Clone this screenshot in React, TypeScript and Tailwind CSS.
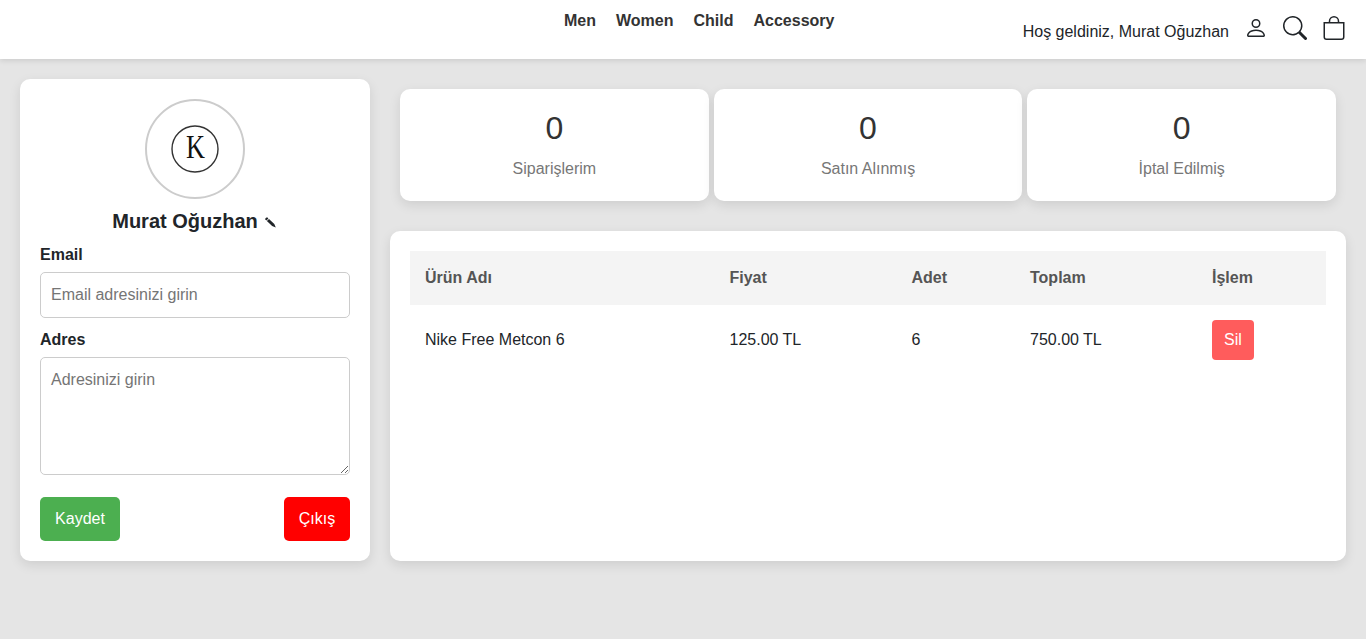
import React from "react";
import { BsBag, BsPerson, BsSearch } from "react-icons/bs";

const links = [
  { label: "Men", width: "w-8" },
  { label: "Women", width: "w-[57.5px]" },
  { label: "Child", width: "w-10" },
  { label: "Accessory", width: "w-[81px]" },
];
const stats = ["Siparişlerim", "Satın Alınmış", "İptal Edilmiş"];

function Header() {
  return (
    <header className="flex h-[59px] items-start bg-white pr-5 shadow-[0_2px_5px_rgba(0,0,0,0.1)]">
      <nav className="ml-[564px] flex gap-5 pt-[9px] font-bold text-[#333]">
        {links.map((l) => (
          <a key={l.label} href="#" className={l.width}>{l.label}</a>
        ))}
      </nav>
      <div className="ml-auto flex items-start pt-4">
        <span className="mr-[15px] pt-1">Hoş geldiniz, Murat Oğuzhan</span>
        <BsPerson className="mr-[15px] h-6 w-6" />
        <BsSearch className="mr-[15px] h-6 w-6" />
        <BsBag className="h-6 w-6" />
      </div>
    </header>
  );
}

function Profile() {
  return (
    <aside className="flex h-[482px] w-[350px] shrink-0 flex-col rounded-[10px] bg-white p-5 shadow-[0_4px_12px_rgba(0,0,0,0.1)]">
      <svg className="mx-auto h-[100px] w-[100px] shrink-0" viewBox="0 0 100 100">
        <circle cx="50" cy="50" r="49" fill="white" stroke="#ccc" strokeWidth="2" />
        <circle cx="50" cy="50" r="23" fill="none" stroke="#333" strokeWidth="1.4" />
        <text x="50.5" y="59" textAnchor="middle" fontSize="34" fill="#111" fontFamily="Liberation Serif, serif" textLength="19" lengthAdjust="spacingAndGlyphs">K</text>
      </svg>
      <h2 className="mt-[10px] flex h-6 items-center justify-center pr-[2px] text-[20px] leading-6 font-bold">
        Murat Oğuzhan
        <svg className="mt-[3px] ml-[7px] h-[11px] w-[11px]" viewBox="0 0 11 11" fill="#212529">
          <path d="M0 2.3Q.4.7 2.1.2L3.4 1.4 1.4 3.5ZM1.9 4.1 4 2 9.3 6.9 10.8 10.6 7.1 9.1Z" />
        </svg>
      </h2>
      <label className="mt-[10px] block font-bold">Email</label>
      <input className="mt-[5px] block h-[46px] w-full rounded-[5px] border border-[#ccc] px-[10px] placeholder:text-[#757575]" placeholder="Email adresinizi girin" />
      <label className="mt-[10px] block font-bold">Adres</label>
      <textarea className="mt-[5px] block h-[118px] w-full shrink-0 resize rounded-[5px] border border-[#ccc] p-[10px] placeholder:text-[#757575]" placeholder="Adresinizi girin" />
      <div className="mt-[22px] flex justify-between text-white">
        <button className="h-11 w-20 rounded-[5px] bg-[#4caf50]">Kaydet</button>
        <button className="h-11 w-[66px] rounded-[5px] bg-[red]">Çıkış</button>
      </div>
    </aside>
  );
}

function Orders() {
  return (
    <section className="h-[330px] rounded-[10px] bg-white p-5 shadow-[0_4px_12px_rgba(0,0,0,0.1)]">
      <table className="w-full table-fixed text-left">
        <colgroup>
          <col className="w-[304.5px]" />
          <col className="w-[182px]" />
          <col className="w-[118.5px]" />
          <col className="w-[182px]" />
          <col />
        </colgroup>
        <thead className="bg-[#f4f4f4] text-[#555]">
          <tr>
            {["Ürün Adı", "Fiyat", "Adet", "Toplam", "İşlem"].map((h) => (
              <th key={h} className="h-[54px] px-[15px] py-0">{h}</th>
            ))}
          </tr>
        </thead>
        <tbody>
          <tr>
            {["Nike Free Metcon 6", "125.00 TL", "6", "750.00 TL"].map((v) => (
              <td key={v} className="h-[70px] px-[15px] py-0">{v}</td>
            ))}
            <td className="px-[15px] py-0">
              <button className="block h-10 w-[42px] rounded bg-[#ff5c5c] text-white">Sil</button>
            </td>
          </tr>
        </tbody>
      </table>
    </section>
  );
}

export default function App() {
  return (
    <div className="h-[639px] overflow-hidden bg-[#e5e5e5] font-['Liberation_Sans',Arial,sans-serif] text-base text-[#212529]">
      <Header />
      <main className="flex gap-5 p-5">
        <Profile />
        <div className="min-w-0 flex-1">
          <div className="mt-[10px] mb-[30px] flex gap-[5px] px-[10px]">
            {stats.map((s) => (
              <div key={s} className="h-28 flex-1 rounded-[10px] bg-white pt-5 text-center shadow-[0_4px_12px_rgba(0,0,0,0.1)]">
                <div className="text-[32px] leading-[38px] text-[#333]">0</div>
                <div className="mt-[10px] text-[#777]">{s}</div>
              </div>
            ))}
          </div>
          <Orders />
        </div>
      </main>
    </div>
  );
}
